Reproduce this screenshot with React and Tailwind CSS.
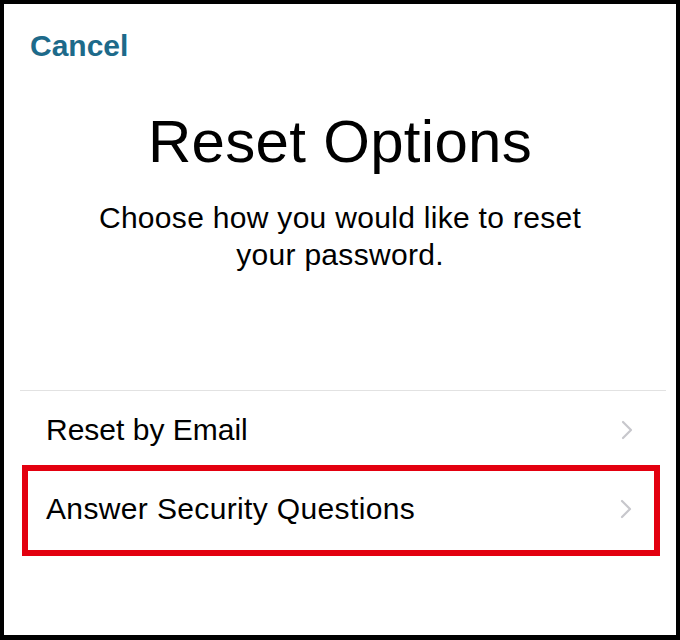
const font = { fontFamily: '"Liberation Sans", Arial, sans-serif' };

function Chevron() {
  return (
    <svg width="14" height="22" viewBox="0 0 14 22" fill="none" className="shrink-0">
      <path d="M3 3 L11 11 L3 19" stroke="#c7c7cc" strokeWidth="2.2" strokeLinecap="round" strokeLinejoin="round" />
    </svg>
  );
}

export default function App() {
  return (
    <div className="w-[680px] h-[640px] bg-black pt-[4px] pl-[4px] pr-[4px] pb-[5px]" style={font}>
      <div className="w-full h-full bg-white flex flex-col">
        {/* header */}
        <div className="pt-[25px] pl-[26px]">
          <button className="text-[30px] leading-[34px] font-bold text-[#1d6a8a]">Cancel</button>
        </div>

        <h1 className="mt-[43px] text-center text-[60px] leading-[72px] text-black tracking-[0.005em]">
          Reset Options
        </h1>

        <p className="mt-[21px] text-center text-[30px] leading-[37px] text-black tracking-[0.01em]">
          Choose how you would like to reset
          <br />
          your password.
        </p>

        {/* options */}
        <div className="mt-[117px] ml-[16px] mr-[10px] border-t border-[#e2e2e2]">
          <div className="h-[74px] pt-[4px] flex items-center justify-between pl-[26px] pr-[32px]">
            <span className="text-[30px] leading-[36px] text-black">Reset by Email</span>
            <Chevron />
          </div>
        </div>

        <div className="ml-[18px] w-[638px] border-[6px] border-[#e3000f]">
          <div className="h-[79px] pb-[3px] flex items-center justify-between pl-[18px] pr-[21px]">
            <span className="text-[30px] leading-[36px] text-black tracking-[0.012em]">Answer Security Questions</span>
            <Chevron />
          </div>
        </div>
      </div>
    </div>
  );
}
